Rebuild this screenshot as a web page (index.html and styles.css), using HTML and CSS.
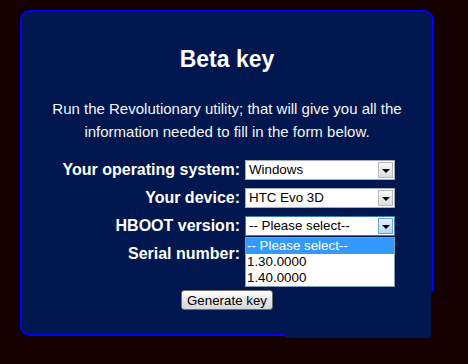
FILE: index.html
```html
<!DOCTYPE html>
<html lang="en">
<head>
  <meta charset="UTF-8">
  <title>Beta key</title>
  <link rel="stylesheet" href="styles.css">
</head>
<body>
  <div class="card">
    <h1>Beta key</h1>
    <p class="intro">Run the Revolutionary utility; that will give you all the information needed to fill in the form below.</p>

    <form class="beta-form">
      <label class="field-label">Your operating system:</label>
      <div class="select-box">
        <span class="select-text">Windows</span>
        <span class="select-arrow"></span>
      </div>

      <label class="field-label">Your device:</label>
      <div class="select-box">
        <span class="select-text">HTC Evo 3D</span>
        <span class="select-arrow"></span>
      </div>

      <label class="field-label">HBOOT version:</label>
      <div class="select-box open">
        <span class="select-text">-- Please select--</span>
        <span class="select-arrow"></span>
        <ul class="select-list">
          <li class="selected">-- Please select--</li>
          <li>1.30.0000</li>
          <li>1.40.0000</li>
        </ul>
      </div>

      <label class="field-label">Serial number:</label>
      <input class="text-input" type="text">

      <div class="actions">
        <button type="button">Generate key</button>
      </div>
    </form>

    <div class="repaint"></div>
  </div>
</body>
</html>
```

FILE: styles.css
```css
body {
  margin: 0;
  padding: 10px 20px;
  background-color: #140000;
  font-family: "Liberation Sans", Arial, sans-serif;
}
.card {
  position: relative;
  width: 410px;
  height: 322px;
  background-color: #00184f;
  border: 2px solid #0000ff;
  border-radius: 10px;
  color: #ffffff;
}
h1 {
  margin: 34px 0 0;
  font-size: 23px;
  line-height: 26px;
  text-align: center;
}
.intro {
  margin: 25px 20px 0;
  font-size: 15px;
  line-height: 23px;
  text-align: center;
  color: #f4f4f4;
}
.beta-form {
  display: grid;
  grid-template-columns: 218px 150px;
  column-gap: 5px;
  row-gap: 8px;
  margin-top: 17px;
}
.field-label {
  font-size: 16px;
  font-weight: bold;
  line-height: 20px;
  text-align: right;
}
.select-box {
  position: relative;
  display: flex;
  align-items: center;
  height: 20px;
  box-sizing: border-box;
  border: 1px solid #a5acb2;
  background-color: #ffffff;
  color: #000000;
  font-size: 13.33px;
}
.select-text {
  flex: 1;
  padding-left: 3px;
  line-height: 18px;
}
.select-arrow {
  position: relative;
  width: 15px;
  height: 16px;
  margin-right: 1px;
  box-sizing: border-box;
  border: 1px solid #b8b8b8;
  background: linear-gradient(#f8f8f8, #dcdcdc);
}
.select-arrow::after {
  content: "";
  position: absolute;
  left: 3px;
  top: 6px;
  border-left: 4px solid transparent;
  border-right: 4px solid transparent;
  border-top: 4px solid #000000;
}
.select-box.open {
  border-color: #3c7fb1;
}
.select-box.open .select-arrow {
  border-color: #6fa3d6;
  background: linear-gradient(#e4f0fc, #b9d6f5);
}
.select-list {
  position: absolute;
  left: -1px;
  top: 20px;
  z-index: 2;
  width: 150px;
  margin: 0;
  padding: 0;
  box-sizing: border-box;
  list-style: none;
  border: 1px solid #7f9db9;
  background-color: #ffffff;
}
.select-list li {
  height: 16px;
  padding-left: 1px;
  line-height: 16px;
  font-size: 13.33px;
  color: #000000;
}
.select-list li.selected {
  background-color: #3399ff;
  color: #ffffff;
}
.text-input {
  height: 20px;
  box-sizing: border-box;
  margin: 0;
  border: 1px solid #7f9db9;
}
.actions {
  grid-column: 1 / span 2;
  display: flex;
  justify-content: center;
  width: 410px;
  margin-top: 18px;
}
button {
  width: 92px;
  height: 20px;
  padding: 0;
  border: 1px solid #707070;
  border-radius: 3px;
  background: linear-gradient(#ffffff, #e3e3e3 60%, #d6d6d6);
  font-family: "Liberation Sans", Arial, sans-serif;
  font-size: 13.33px;
  color: #000000;
}
.repaint {
  position: absolute;
  left: 263px;
  top: 279px;
  width: 146px;
  height: 47px;
  background-color: #00184f;
  border-right: 3px solid #140000;
}
```
